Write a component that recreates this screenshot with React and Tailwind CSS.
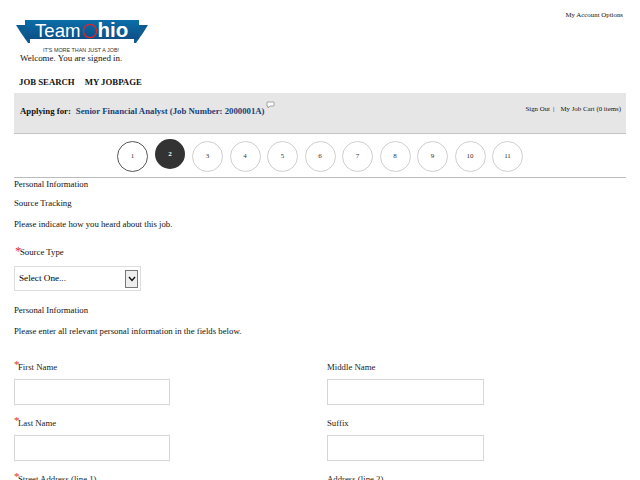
import React from "react";

const Step = ({ n, active, first }) => (
  <div className={`rounded-full flex items-center justify-center text-[7px] ${active ? "w-[30px] h-[30px] mx-[0.5px] -mt-[2px] bg-[#333333] text-white font-bold" : first ? "w-[31px] h-[31px] border border-[#555555] bg-white text-[#333]" : "w-[31px] h-[31px] border border-[#cfcfcf] bg-white text-[#333]"}`}>{n}</div>
);

const Field = ({ label, req, width }) => (
  <div className="h-[56px]">
    <div className="h-[18px] flex items-start text-[8.75px] leading-[11px] text-[#222] pt-[1px]">
      {req && <span className="text-[#e03030] text-[11px] leading-[8px] w-[4px]">*</span>}
      <span className="pt-[2px]">{label}</span>
    </div>
    <div className={`mt-[2px] h-[26px] border border-[#d6d6d6] bg-white ${width}`} />
  </div>
);

export default function App() {
  return (
    <div className="relative w-[640px] h-[480px] overflow-hidden bg-white text-[#111] font-['Liberation_Serif',serif]">
      <div className="absolute right-[17px] top-[10px] text-[6.875px] leading-[10px]">My Account Options</div>
      <div className="pl-[14px] pt-[18px]">
        <svg width="138" height="36" viewBox="14 18 138 36" className="block">
          <defs>
            <linearGradient id="band" x1="0" y1="0" x2="0" y2="1">
              <stop offset="0" stopColor="#0a6ea8" />
              <stop offset="1" stopColor="#0d4f86" />
            </linearGradient>
          </defs>
          <polygon points="16,25 30,25 30,43 28,43 21,33" fill="#0f5c92" />
          <polygon points="148,25 134,25 134,43 136,43 143,33" fill="#0f5c92" />
          <path d="M25,20 H139 V39 H25 Z" fill="url(#band)" />
          <text x="35" y="37" fontFamily="Liberation Sans, sans-serif" fontSize="18.6" fill="#fff">Team</text>
          <circle cx="90" cy="31" r="6.6" fill="none" stroke="#e3242b" strokeWidth="1.3" />
          <text x="97.5" y="37" fontFamily="Liberation Sans, sans-serif" fontSize="20.5" fontWeight="700" fill="#fff">hio</text>
          <text x="43" y="52" fontFamily="Liberation Sans, sans-serif" fontSize="5.4" fill="#333">IT'S MORE THAN JUST A JOB!</text>
        </svg>
      </div>
      <div className="pl-[20px] text-[8.95px] leading-[10px] mt-[-1px]">Welcome. You are signed in.</div>
      <div className="pl-[19px] mt-[14px] flex gap-[10px] text-[8.75px] leading-[10px] font-bold">
        <span>JOB SEARCH</span>
        <span>MY JOBPAGE</span>
      </div>
      <div className="ml-[14px] mt-[6px] h-[41px] w-[612px] bg-[#e6e6e6] border-b border-[#c4c4c4] flex items-start justify-between">
        <div className="pl-[6px] pt-[12px] flex items-start text-[8.75px] leading-[12px] font-bold">
          <span>Applying for:</span>
          <span className="ml-[5px] text-[#1a3f78]">Senior Financial Analyst (Job Number: 2000001A)</span>
          <svg width="9" height="8" viewBox="0 0 9 8" className="-mt-[4px] ml-[1px]"><path d="M1,1 H8 V5 H4 L2,7 V5 H1 Z" fill="#fff" stroke="#888" strokeWidth="0.7" /></svg>
        </div>
        <div className="pr-[5px] pt-[10px] flex text-[6.875px] leading-[12px]">
          <span>Sign Out</span><span className="ml-[3px]">|</span><span className="ml-[6px]">My Job Cart (0 items)</span>
        </div>
      </div>
      <div className="pl-[117px] mt-[7px] flex gap-[6.5px] items-start">
        {[1,2,3,4,5,6,7,8,9,10,11].map(n => <Step key={n} n={n} active={n===2} first={n===1} />)}
      </div>
      <div className="ml-[14px] mt-[5px] w-[612px] border-t border-[#bbbbbb] pt-[1px] text-[8.75px] leading-[11px]">
        <div>Personal Information</div>
        <div className="mt-[8px]">Source Tracking</div>
        <div className="mt-[10px]">Please indicate how you heard about this job.</div>
        <div className="mt-[16px] flex items-start h-[12px]"><span className="text-[#e03030] text-[13px] leading-[9px] ml-[1px] w-[5px]">*</span><span className="pt-[1px]">Source Type</span></div>
        <div className="mt-[8px] w-[127px] h-[25px] border border-[#dddddd] flex items-center justify-between pl-[4px] pr-[2px] text-[9.2px] text-black">
          <span>Select One...</span>
          <span className="w-[13px] h-[18px] border border-[#777] bg-[#eeeeee] flex items-center justify-center">
            <svg width="8" height="6" viewBox="0 0 8 6"><path d="M1,1 L4,4.5 L7,1" fill="none" stroke="#111" strokeWidth="1.4" /></svg>
          </span>
        </div>
        <div className="mt-[14px]">Personal Information</div>
        <div className="mt-[10px]">Please enter all relevant personal information in the fields below.</div>
        <div className="mt-[22px] grid grid-cols-[313px_1fr]">
          <Field label="First Name" req width="w-[156px]" />
          <Field label="Middle Name" width="w-[157px]" />
          <Field label="Last Name" req width="w-[156px]" />
          <Field label="Suffix" width="w-[157px]" />
          <Field label="Street Address (line 1)" req width="w-[156px]" />
          <Field label="Address (line 2)" width="w-[157px]" />
        </div>
      </div>
    </div>
  );
}
